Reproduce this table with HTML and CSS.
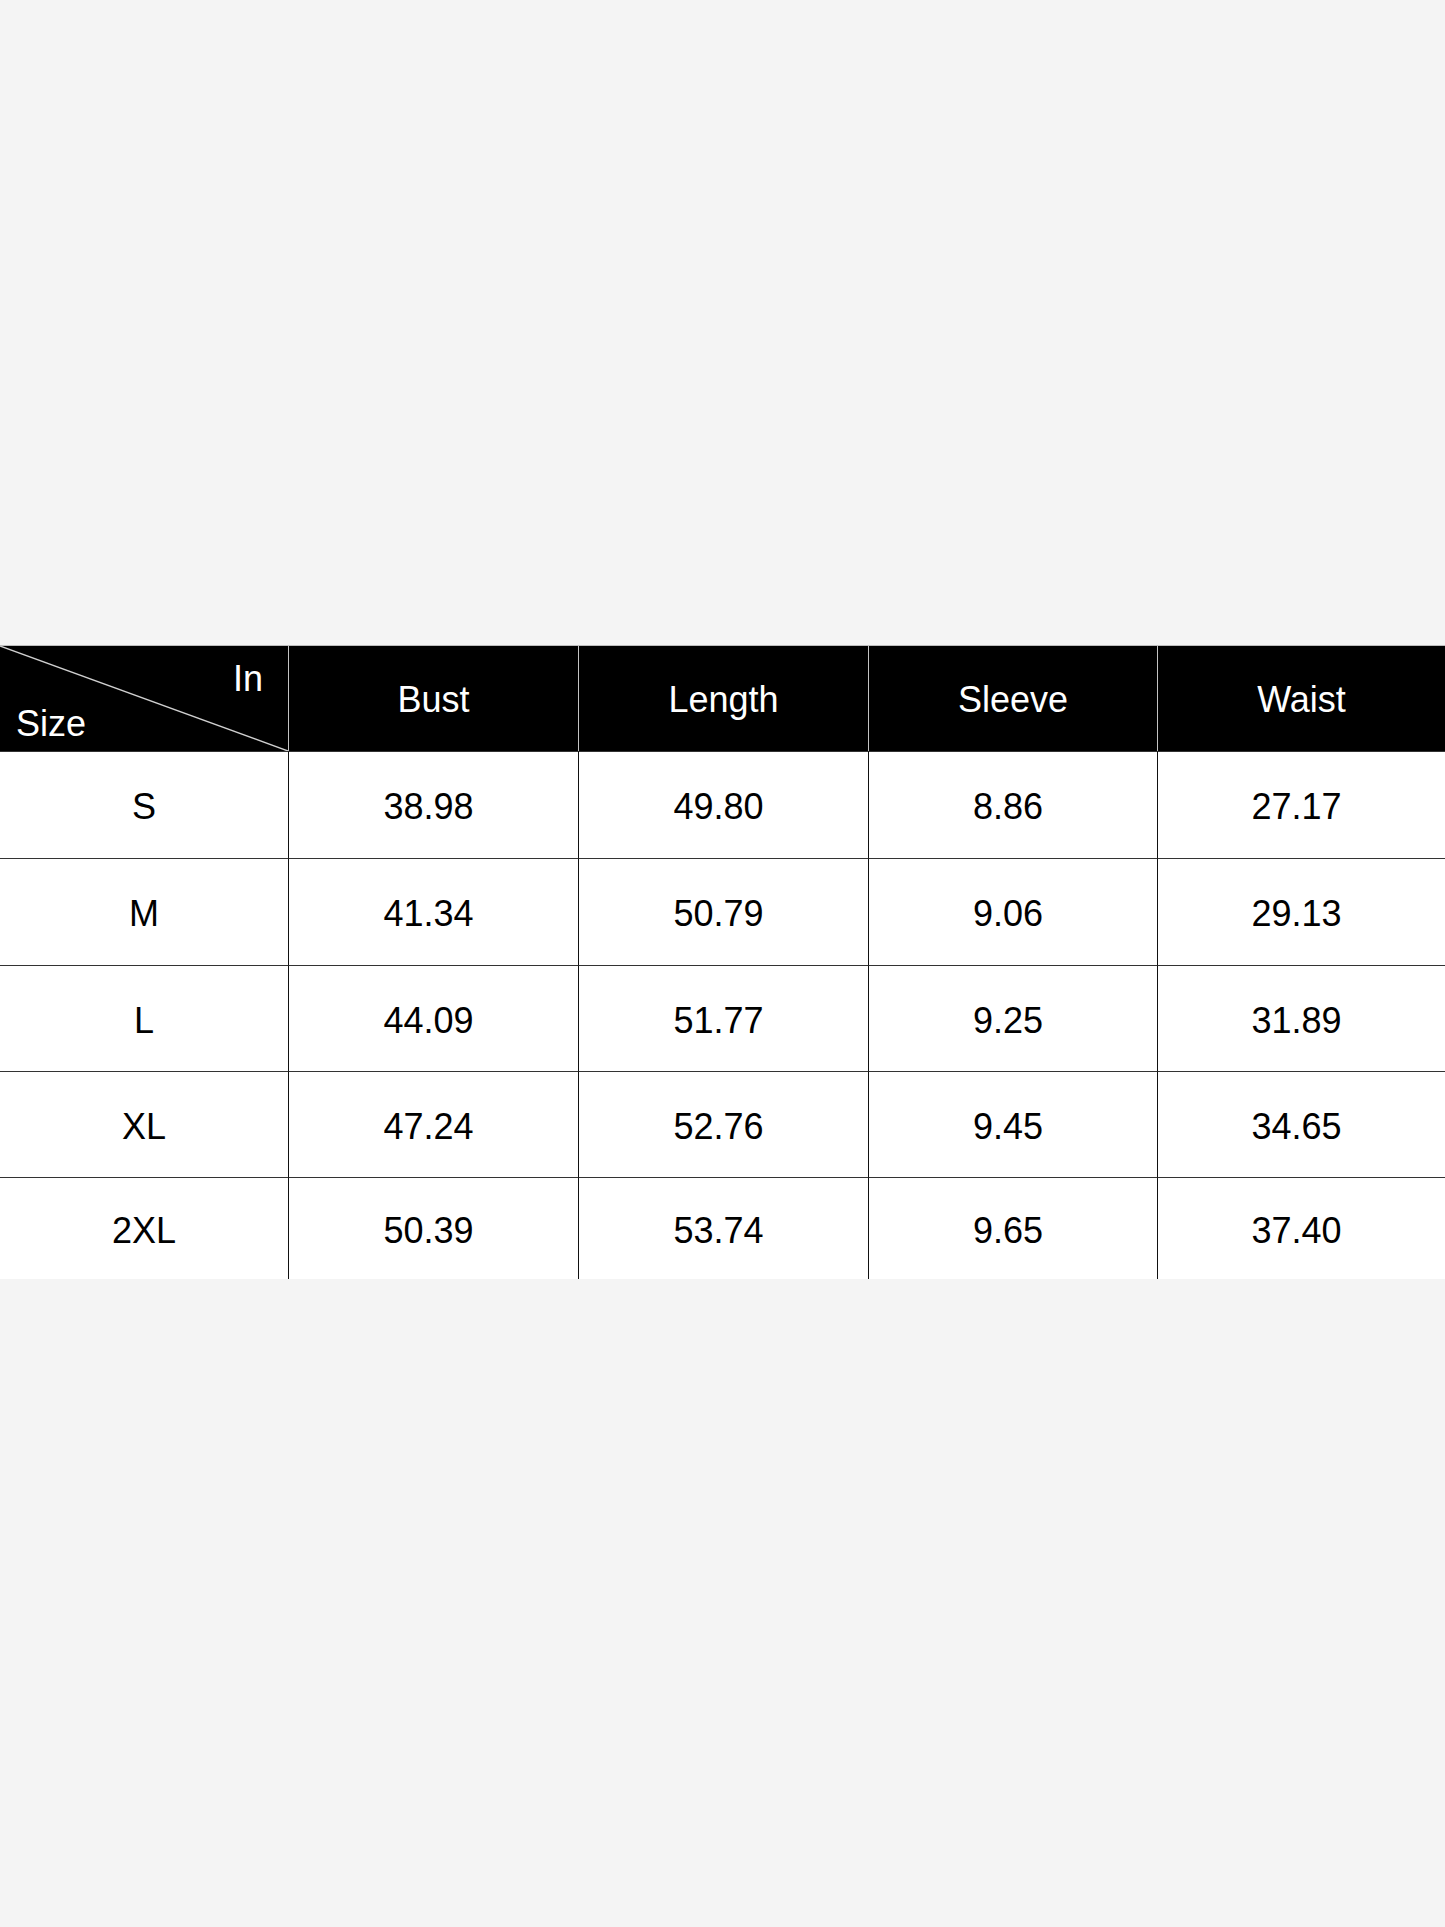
FILE: index.html
```html
<!DOCTYPE html>
<html lang="en">
<head>
<meta charset="utf-8">
<title>Size Chart</title>
<link rel="stylesheet" href="styles.css">
</head>
<body>
<main class="page">
  <div class="chart">
    <div class="cell head corner">
      <svg class="diag" width="288" height="105" viewBox="0 0 288 105" preserveAspectRatio="none"><line x1="0" y1="0" x2="288" y2="105" stroke="#cfcfcf" stroke-width="1.4"/></svg>
      <span class="corner-in">In</span>
      <span class="corner-size">Size</span>
    </div>
    <div class="cell head">Bust</div>
    <div class="cell head">Length</div>
    <div class="cell head">Sleeve</div>
    <div class="cell head">Waist</div>

    <div class="cell first">S</div><div class="cell num">38.98</div><div class="cell num">49.80</div><div class="cell num">8.86</div><div class="cell num">27.17</div>
    <div class="cell first">M</div><div class="cell num">41.34</div><div class="cell num">50.79</div><div class="cell num">9.06</div><div class="cell num">29.13</div>
    <div class="cell first">L</div><div class="cell num">44.09</div><div class="cell num">51.77</div><div class="cell num">9.25</div><div class="cell num">31.89</div>
    <div class="cell first">XL</div><div class="cell num">47.24</div><div class="cell num">52.76</div><div class="cell num">9.45</div><div class="cell num">34.65</div>
    <div class="cell first">2XL</div><div class="cell num">50.39</div><div class="cell num">53.74</div><div class="cell num">9.65</div><div class="cell num">37.40</div>
  </div>
</main>
</body>
</html>
```

FILE: styles.css
```css
html, body {
  margin: 0;
  padding: 0;
  background: #f4f4f4;
}
.page {
  width: 1445px;
  height: 1927px;
  padding-top: 645px;
  box-sizing: border-box;
  font-family: "Liberation Sans", Arial, sans-serif;
}
.chart {
  display: grid;
  grid-template-columns: 288px 290px 290px 289px 288px;
  grid-template-rows: 105px 107px 107px 106px 106px 102px;
  border-top: 1px solid #bdbdbd;
}
.cell {
  box-sizing: border-box;
  display: flex;
  align-items: center;
  justify-content: center;
  font-size: 36px;
  color: #000;
  background: #fff;
  border-left: 1px solid #111;
  border-top: 1px solid #333;
  padding-top: 4px;
}
.cell.first {
  border-left: none;
}
.cell.num {
  padding-right: 10px;
}
.cell.head {
  background: #000;
  color: #fff;
  border-top: none;
  border-left: 1px solid #c4c4c4;
  padding-top: 2px;
  padding-right: 0;
}
.cell.head.corner {
  border-left: none;
  position: relative;
  flex-direction: column;
  align-items: stretch;
  justify-content: flex-start;
  padding: 12px 0 0 0;
  gap: 4px;
}
.diag {
  position: absolute;
  left: 0;
  top: 0;
}
.corner-in {
  align-self: flex-end;
  padding-right: 25px;
  line-height: 41px;
}
.corner-size {
  align-self: flex-start;
  padding-left: 16px;
  line-height: 41px;
}
```
